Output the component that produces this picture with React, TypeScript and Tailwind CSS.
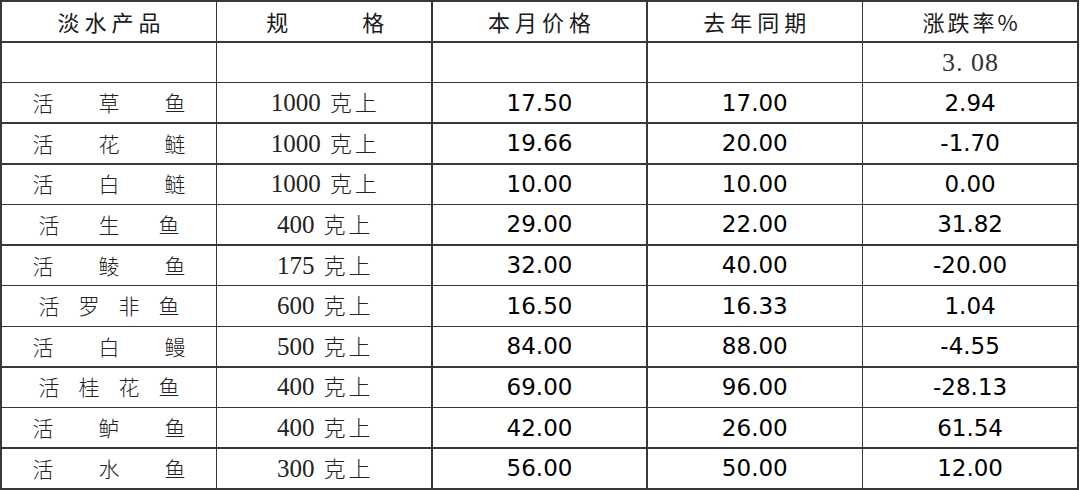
import React from "react";

type Row = { name: string[]; narrow: boolean; spec: string; cur: string; last: string; rate: string };

const rows: Row[] = [
  { name: ["活", "草", "鱼"], narrow: false, spec: "1000", cur: "17.50", last: "17.00", rate: "2.94" },
  { name: ["活", "花", "鲢"], narrow: false, spec: "1000", cur: "19.66", last: "20.00", rate: "-1.70" },
  { name: ["活", "白", "鲢"], narrow: false, spec: "1000", cur: "10.00", last: "10.00", rate: "0.00" },
  { name: ["活", "生", "鱼"], narrow: true, spec: "400", cur: "29.00", last: "22.00", rate: "31.82" },
  { name: ["活", "鲮", "鱼"], narrow: false, spec: "175", cur: "32.00", last: "40.00", rate: "-20.00" },
  { name: ["活", "罗", "非", "鱼"], narrow: true, spec: "600", cur: "16.50", last: "16.33", rate: "1.04" },
  { name: ["活", "白", "鳗"], narrow: false, spec: "500", cur: "84.00", last: "88.00", rate: "-4.55" },
  { name: ["活", "桂", "花", "鱼"], narrow: true, spec: "400", cur: "69.00", last: "96.00", rate: "-28.13" },
  { name: ["活", "鲈", "鱼"], narrow: false, spec: "400", cur: "42.00", last: "26.00", rate: "61.54" },
  { name: ["活", "水", "鱼"], narrow: false, spec: "300", cur: "56.00", last: "50.00", rate: "12.00" },
];

const cell = "bg-white flex items-center justify-center";
const hei = { fontFamily: '"Noto Sans CJK SC", sans-serif' };
const num = { fontFamily: '"DejaVu Sans", Verdana, sans-serif' };
const serif = { fontFamily: '"Liberation Serif", "Noto Sans CJK SC", serif' };

export default function App() {
  return (
    <div className="w-[1080px] h-[490px] bg-white">
      <div className="w-[1079px] h-[490px] bg-[#383838] p-[2px] grid grid-cols-5 grid-rows-12 gap-[1.5px]">
        {/* header */}
        <div className={cell}>
          <span className="text-[22px] tracking-[5px] mr-[-5px] text-[#1a1a1a]" style={hei}>淡水产品</span>
        </div>
        <div className={cell}>
          <div className="w-[118px] flex justify-between text-[22px] text-[#1a1a1a] ml-[2px]" style={hei}>
            <span>规</span>
            <span>格</span>
          </div>
        </div>
        <div className={cell}>
          <span className="text-[22px] tracking-[5px] mr-[-5px] text-[#1a1a1a]" style={hei}>本月价格</span>
        </div>
        <div className={cell}>
          <span className="text-[22px] tracking-[5px] mr-[-5px] text-[#1a1a1a]" style={hei}>去年同期</span>
        </div>
        <div className={cell}>
          <span className="text-[22px] tracking-[3px] mr-[-3px] text-[#1a1a1a]" style={hei}>涨跌率%</span>
        </div>

        {/* summary row */}
        <div className={cell}></div>
        <div className={cell}></div>
        <div className={cell}></div>
        <div className={cell}></div>
        <div className={cell}>
          <span className="text-[26px] tracking-[1px] text-[#333] ml-[1px]" style={serif}>3.&nbsp;08</span>
        </div>

        {rows.map((r, i) => (
          <React.Fragment key={i}>
            <div className={cell}>
              <div
                className={`flex justify-between text-[21px] font-light text-[#222] ${r.narrow ? "w-[141px]" : "w-[153px]"}`}
                style={hei}
              >
                {r.name.map((c, j) => (
                  <span key={j}>{c}</span>
                ))}
              </div>
            </div>
            <div className={cell}>
              <div className="flex items-baseline text-[#222] ml-[2px]">
                <span className="text-[25px]" style={serif}>{r.spec}</span>
                <span className="text-[22px] font-light tracking-[3px] ml-[9px]" style={hei}>克上</span>
              </div>
            </div>
            <div className={cell}>
              <span className="text-[23px] text-black" style={num}>{r.cur}</span>
            </div>
            <div className={cell}>
              <span className="text-[23px] text-black" style={num}>{r.last}</span>
            </div>
            <div className={cell}>
              <span className="text-[23px] text-black" style={num}>{r.rate}</span>
            </div>
          </React.Fragment>
        ))}
      </div>
    </div>
  );
}
